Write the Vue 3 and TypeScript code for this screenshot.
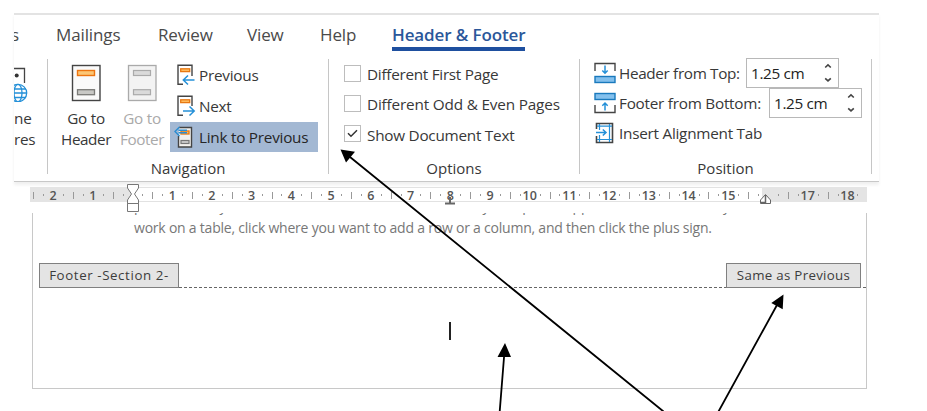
<script setup lang="ts">
interface Tab { label: string; cls: string }
const tabs: Tab[] = [
  { label: 's', cls: 'cut' },
  { label: 'Mailings', cls: 'mailings' },
  { label: 'Review', cls: 'review' },
  { label: 'View', cls: 'view' },
  { label: 'Help', cls: 'help' },
  { label: 'Header & Footer', cls: 'active' },
]
const options = [
  { label: 'Different First Page', cls: 'o1', checked: false },
  { label: 'Different Odd & Even Pages', cls: 'o2', checked: false },
  { label: 'Show Document Text', cls: 'o3', checked: true },
]
const unit = 39.72
const origin = 102.5
const marks: { x: number; label: string }[] = []
const ticks: { x: number; tall: boolean }[] = []
for (let n = -2; n <= 18; n++) {
  if (n !== 0 && n !== 16) marks.push({ x: origin + n * unit, label: String(Math.abs(n)) })
}
for (let q = -10; q <= 73; q++) {
  if (q % 4 === 0) continue
  ticks.push({ x: Math.round(origin + (q * unit) / 4), tall: q % 2 === 0 })
}
</script>

<template>
  <main class="screen">
    <header class="ribbon">
      <nav class="tabs">
        <span v-for="t in tabs" :key="t.label" class="tab" :class="t.cls"><span>{{ t.label }}</span></span>
      </nav>
      <div class="groups">
        <section class="group insert">
          <svg width="16" height="45" viewBox="0 0 16 45" fill="none">
            <path d="M0 11.500H10.500V26" stroke="#444" stroke-width="1.3" />
            <circle cx="2.7" cy="18.500" r="2" fill="#333" />
            <g stroke="#2490d8" stroke-width="1.3">
              <circle cx="4" cy="36" r="8.700" fill="#fff" />
              <ellipse cx="4" cy="36" rx="4" ry="8.700" />
              <path d="M-4 32H12M-5 36H13M-4 40.500H12" />
            </g>
          </svg>
          <span class="big b1">ne</span><span class="big b2">res</span>
        </section>
        <section class="group navigation">
          <div class="tools">
            <button class="goto header">
              <svg width="30" height="38" viewBox="0 0 30 38">
                <rect x="1.500" y="1.500" width="27.500" height="35" fill="#fafafa" stroke="#444" stroke-width="1.4" />
                <rect x="6.500" y="6.500" width="17" height="5" fill="#fcc675" stroke="#ed7410" stroke-width="1.4" />
                <rect x="6.500" y="25.700" width="17" height="5" fill="#c8c8c5" stroke="#7b7b78" stroke-width="1.3" />
              </svg>
              <span>Go to</span><span class="second">Header</span>
            </button>
            <button class="goto footer">
              <svg width="30" height="38" viewBox="0 0 30 38">
                <rect x="1.500" y="1.500" width="27.500" height="35" fill="#f3f3f3" stroke="#aaa" stroke-width="1.3" />
                <rect x="6.500" y="6.500" width="17" height="5" fill="#dadada" stroke="#aaa" stroke-width="1.2" />
                <rect x="6.500" y="25.700" width="17" height="5" fill="#dadada" stroke="#aaa" stroke-width="1.2" />
              </svg>
              <span>Go to</span><span class="second">Footer</span>
            </button>
            <div class="links">
              <button class="link prev">
                <svg width="20" height="22" viewBox="0 0 20 22" fill="none">
                  <path d="M7 20.300H2V1.200H16V12" stroke="#444" stroke-width="1.4" />
                  <rect x="4.700" y="4.800" width="9" height="2.800" fill="#ffbd60" stroke="#e87812" stroke-width="1.3" />
                  <path d="M18.500 16H7.500M12 11.500L7.300 16L12 20.500" stroke="#2490d8" stroke-width="1.5" />
                </svg><span>Previous</span>
              </button>
              <button class="link next">
                <svg width="20" height="22" viewBox="0 0 20 22" fill="none">
                  <path d="M7 20.300H2V1.200H16V11" stroke="#444" stroke-width="1.4" />
                  <rect x="4.700" y="4.800" width="9" height="2.800" fill="#ffbd60" stroke="#e87812" stroke-width="1.3" />
                  <path d="M7 16H18M13.500 11.500L18.200 16L13.500 20.500" stroke="#2490d8" stroke-width="1.5" />
                </svg><span>Next</span>
              </button>
              <button class="link linked">
                <svg width="20" height="23" viewBox="0 0 20 23" fill="none">
                  <path d="M4.500 10V21H17.500V1.500H5" fill="#f3f1ee" stroke="#444" stroke-width="1.4" />
                  <rect x="7" y="5" width="8" height="3" fill="#ffbd60" stroke="#e87812" stroke-width="1.3" />
                  <rect x="7" y="14.500" width="8" height="3" fill="#ccc" stroke="#777" stroke-width="1.2" />
                  <path d="M13 4.200H4.500M13 6.800H4.500M5.500 1L1 5.500L5.500 10" stroke="#2b8dd2" stroke-width="1.4" />
                </svg><span>Link to Previous</span>
              </button>
            </div>
          </div>
          <h2 class="g-nav"><span>Navigation</span></h2>
        </section>
        <section class="group opts">
          <div class="checks">
            <label v-for="o in options" :key="o.cls" class="check" :class="o.cls">
              <span class="box"><svg v-if="o.checked" width="15" height="15" viewBox="0 0 15 15"><path d="M3 7.200L6 10.200L12 4.300" fill="none" stroke="#333" stroke-width="1.5" /></svg></span>
              <span>{{ o.label }}</span>
            </label>
          </div>
          <h2 class="g-opt"><span>Options</span></h2>
        </section>
        <section class="group position">
          <div class="fields">
            <div class="field f1">
              <svg width="22" height="22" viewBox="0 0 22 22" fill="none">
                <path d="M1 9V1.500H21V9" stroke="#444" stroke-width="1.4" />
                <rect x="1" y="14.500" width="20" height="6" fill="#83c0ed" stroke="#1979bd" stroke-width="1.4" />
                <path d="M11 3.500V11M8.300 8.500L11 11.200L13.700 8.500" stroke="#2490d8" stroke-width="1.5" />
              </svg><span class="name">Header from Top:</span>
              <div class="spin"><span>1.25 cm</span><svg width="10" height="20" viewBox="0 0 10 20" fill="none" stroke="#444" stroke-width="1.600"><path d="M2.200 4.500L5 1.900L7.800 4.500M2.200 15.300L5 17.900L7.800 15.300" /></svg></div>
            </div>
            <div class="field f2">
              <svg width="22" height="22" viewBox="0 0 22 22" fill="none">
                <path d="M1 13V20.500H21V13" stroke="#444" stroke-width="1.4" />
                <rect x="1" y="1.500" width="20" height="6" fill="#83c0ed" stroke="#1979bd" stroke-width="1.4" />
                <path d="M11 18.500V11M8.300 13.700L11 11L13.700 13.700" stroke="#2490d8" stroke-width="1.5" />
              </svg><span class="name">Footer from Bottom:</span>
              <div class="spin"><span>1.25 cm</span><svg width="10" height="20" viewBox="0 0 10 20" fill="none" stroke="#444" stroke-width="1.600"><path d="M2.200 4.500L5 1.900L7.800 4.500M2.200 15.300L5 17.900L7.800 15.300" /></svg></div>
            </div>
            <div class="field f3">
              <svg width="22" height="22" viewBox="0 0 22 22" fill="none">
                <path d="M2.500 7V1.500H18.500V20.500H2.500V14" stroke="#444" stroke-width="1.6" />
                <path d="M5.500 2V8M5.500 13V20M15.500 2V20M3 4.200H18M3 17.500H18" stroke="#2490d8" stroke-width="1.2" />
                <path d="M2 10.500H12M8.800 7.500L12 10.500L8.800 13.500" stroke="#2490d8" stroke-width="1.5" />
              </svg><span class="name">Insert Alignment Tab</span>
            </div>
          </div>
          <h2 class="g-pos"><span>Position</span></h2>
        </section>
      </div>
    </header>
    <div class="ruler">
      <svg width="837" height="26" viewBox="0 0 837 26">
        <rect width="837" height="15" y="5" fill="#e4e4e4" />
        <rect x="102" width="630" height="15" y="5" fill="#fff" />
        <path d="M102 5.500H732M102 19.500H732" stroke="#e2e2e2" />
        <line v-for="t in ticks" :key="t.x" :x1="t.x + .5" :x2="t.x + .5" :y1="t.tall ? 10 : 12" :y2="t.tall ? 17 : 14" stroke="#999" />
        <text v-for="m in marks" :key="m.x" :x="m.x" y="17.500" text-anchor="middle">{{ m.label }}</text>
        <path d="M97.500 2.500H108.500V6L104.500 12L108.500 18V21.500H97.500V18L101.500 12L97.500 6ZM97.500 21.500H108.500V29.500H97.500Z" fill="#fff" stroke="#777" />
        <path d="M420 15V21M415 21.500H425" stroke="#666" stroke-width="2" fill="none" />
        <path d="M730.500 21.500V18L735.500 12.500L740.500 18V21.500Z" fill="#fff" stroke="#666" />
        <path d="M735.500 13V21M731 20.500H735" stroke="#666" stroke-width="1.500" />
      </svg>
    </div>
    <article class="page">
      <div class="body">
        <p class="line clipped"><span>picture fits in your document, click it and a button for layout options appears next to it. When you</span></p>
        <p class="line"><span>work on a table, click where you want to add a row or a column, and then click the plus sign.</span></p>
      </div>
      <div class="footer-bar">
        <span class="tag left"><span>Footer -Section 2-</span></span>
        <svg class="dash" height="1" width="547"><line x2="547" y1=".5" y2=".5" stroke="#666" stroke-dasharray="3 2" /></svg>
        <span class="tag right"><span>Same as Previous</span></span>
        <svg class="dash" height="1" width="5"><line x1="2" x2="5" y1=".5" y2=".5" stroke="#666" /></svg>
      </div>
      <div class="caret"></div>
    </article>
    <svg class="arrows" width="927" height="411" viewBox="0 0 927 411">
      <g stroke="#000" stroke-width="1.8">
        <path d="M350 157L663.500 411.500M504.200 355L499.700 411.500M777 305L718.500 411.500" fill="none" />
      </g>
      <path d="M340.500 149.500L355 151.800L346 162.500ZM505 343L497.500 357L511 357ZM783.500 294.500L771.300 303L782.700 309.300Z" />
    </svg>
  </main>
</template>

<style>
body { background: #fff; overflow: hidden; }
</style>
<style scoped>
* { box-sizing: border-box; }
.screen { position: relative; width: 927px; height: 411px; overflow: hidden; background: #fff; font: 15.3px/20px "Open Sans", "Noto Sans", sans-serif; letter-spacing: -.25px; color: #383838; white-space: nowrap; }
button { all: unset; box-sizing: border-box; }
svg { display: block; flex: none; }
.ribbon { margin: 13px 48px 0 14px; height: 169px; border-top: 2px solid #e3e3e3; border-bottom: 1px solid #c8c8c8; width: 865px; box-shadow: 0 3px 3px #f0f0f0; }
.tabs { display: flex; height: 44px; padding-top: 9px; font-size: 17px; line-height: 22px; letter-spacing: -.12px; overflow: hidden; color: #4a4a4a; }
.tab { flex: none; height: 27px; }
.cut { width: 41px; margin-left: -3px; }
.mailings { width: 102px; margin-left: 4px; }
.review { width: 89px; }
.view { width: 73px; }
.help { width: 72px; }
.active { width: 133px; color: #2b579a; font-weight: 600; border-bottom: 4px solid #1e4f9f; }
.groups { display: flex; height: 118px; }
.group { height: 115px; border-right: 1px solid #c6c6c6; }
.insert { width: 34px; overflow: hidden; }
.insert svg { margin-top: -2px; }
.big { display: block; height: 21px; line-height: 21px; }
.insert .b1 { margin-top: 6px; }
.navigation { width: 281px; }
.tools { display: flex; height: 97px; }
.goto { display: flex; flex-direction: column; align-items: center; width: 56px; padding-top: 5px; line-height: 21px; }
.goto.header { margin-left: 10px; }
.goto .second { letter-spacing: -.45px; }
.goto.footer { color: #aaa; }
.goto svg { margin-bottom: 6px; }
.links { flex: none; width: 149px; }
.link { display: flex; width: 148px; height: 31px; padding-left: 6px; gap: 3px; align-items: center; }
.linked { height: 30px; padding-left: 4px; gap: 5px; background: #a3b8d3; color: #262626; margin-top: 1px; }
h2 { margin: 3px 0 0; font-size: 15px; font-weight: 400; line-height: 18px; letter-spacing: 0; text-align: center; }
.opts { width: 251px; }
.checks { height: 97px; padding: 0 0 0 15px; }
.check { display: flex; height: 30px; align-items: center; gap: 6px; }
.o1 { letter-spacing: -.28px; }
.o2 { letter-spacing: -.17px; }
.o3 span:last-child { padding-top: 1px; }
.box { width: 17px; height: 17px; border: 1px solid #bdbdbd; position: relative; top: -1px; }
.position { width: 292px; }
.fields { height: 98px; margin-top: -1px; padding-left: 14px; }
.field { display: flex; height: 30px; align-items: center; gap: 3px; }
.f1 .name { width: 124px; letter-spacing: -.35px; }
.f2 .name { width: 147px; }
.spin { display: flex; justify-content: space-between; align-items: center; width: 93px; height: 30px; border: 1px solid #b8b8b8; padding: 0 5px 0 4px; color: #222; letter-spacing: -.35px; }
.ruler { height: 30px; margin: 0 30px; }
.ruler text { font: 600 12.500px "Open Sans", sans-serif; letter-spacing: 0; fill: #555; }
.ruler svg { overflow: visible; }
.page { width: 835px; height: 176px; margin: 1px 0 0 32px; border: 1px solid #c8c8c8; border-top: 0; }
.body { height: 50px; padding-left: 101px; font-size: 14px; letter-spacing: -.22px; color: #777; }
.line { margin: 0; height: 28px; line-height: 23px; }
.clipped { height: 3px; line-height: 20px; overflow: hidden; display: flex; align-items: flex-end; }
.footer-bar { display: flex; align-items: flex-end; padding: 0 0 0 6px; }
.tag { flex: none; height: 25px; border: 1.500px solid #808080; background: #e4e4e4; font-size: 13.300px; line-height: 22px; text-align: center; color: #3c3c3c; }
.left { width: 140px; letter-spacing: .6px; }
.right { width: 135px; letter-spacing: .3px; }
.caret { width: 1.500px; height: 18px; margin: 34px 0 0 416px; background: #222; }
.arrows { position: absolute; inset: 0; }
</style>
